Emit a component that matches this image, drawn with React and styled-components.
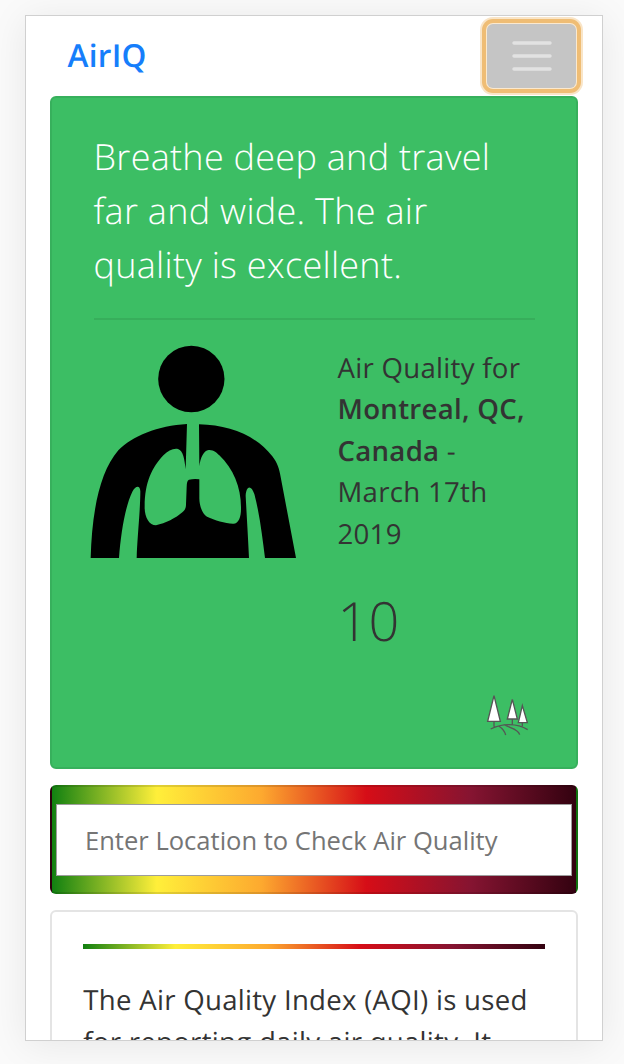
import React from "react";
import styled, { createGlobalStyle } from "styled-components";

const AQI_GRADIENT =
  "linear-gradient(to right, #118011 0%, #ffef3a 20%, #fda92f 40%, #d60d17 60%, #851431 80%, #330210 100%)";

const GlobalStyle = createGlobalStyle`
  *, *::before, *::after { box-sizing: border-box; }
  body {
    margin: 0;
    background: #fafafa;
    font-family: "Open Sans", sans-serif;
    letter-spacing: 0.28px;
    text-rendering: geometricPrecision;
    color: #333;
  }
  p, h1 { margin: 0; }
`;

const Page = styled.div`
  height: 1064px;
  padding: 15px 21px 23px 25px;
  overflow: hidden;
`;

const Screen = styled.main`
  width: 578px;
  height: 1026px;
  border: 1px solid #d0d0d0;
  background: #fff;
  box-shadow: 0 4px 36px rgba(0, 0, 0, 0.08);
  overflow: hidden;
`;

const Navbar = styled.nav`
  display: flex;
  justify-content: space-between;
  height: 80px;
  padding: 8px 26px 0 41.5px;
`;

const Brand = styled.a`
  color: #167efb;
  font-size: 31.6px;
  font-weight: 600;
  line-height: 63px;
`;

const MenuButton = styled.button`
  display: flex;
  align-items: center;
  justify-content: center;
  width: 89px;
  height: 64px;
  padding: 0;
  border: 0;
  border-radius: 6px;
  background: #c5c5c5;
  box-shadow: 0 0 0 1px #fbe9cf, 0 0 0 5px #efbd75, 0 0 0 7px #f9e5c8;
`;

const MenuIcon = styled.svg`
  width: 40px;
  height: 32px;
`;

const Stack = styled.div`
  display: flex;
  flex-direction: column;
  gap: 16px;
  padding: 0 24px;
`;

const Card = styled.section`
  flex: none;
  height: ${({ $height }) => $height}px;
  border: 2px solid ${({ $border }) => $border || "#e4e4e4"};
  border-radius: 6px;
  background: ${({ $background }) => $background || "#fff"};
  padding: ${({ $padding }) => $padding};
`;

const Verdict = styled.h1`
  color: #fff;
  font-size: 36px;
  font-weight: 300;
  line-height: 54px;
  white-space: nowrap;
`;

const Divider = styled.hr`
  height: 2px;
  margin: 26px 0;
  border: 0;
  background: #37ae5b;
`;

const Columns = styled.div`
  display: flex;
`;

const Figure = styled.svg`
  flex: none;
  width: 230px;
  height: 235px;
  margin: -11px 28px 0 -14px;
`;

const Reading = styled.div`
  width: 197px;
  padding-top: 1.5px;
`;

const Place = styled.p`
  font-size: 27.6px;
  line-height: 41.5px;
  white-space: nowrap;

  strong { font-weight: 600; }
`;

const Score = styled.p`
  margin-top: 25px;
  font-size: 54px;
  font-weight: 300;
  line-height: 81px;
`;

const Trees = styled.svg`
  display: block;
  width: 44px;
  height: 42px;
  margin: 32.5px 5px 0 auto;
`;

const SearchBar = styled.form`
  flex: none;
  height: 109px;
  padding: 17px 4px;
  border: 2px solid rgba(0, 0, 0, 0.12);
  border-radius: 6px;
  background: ${AQI_GRADIENT};
`;

const SearchInput = styled.input`
  display: block;
  width: 100%;
  height: 72px;
  padding: 0 28px;
  border: 1px solid rgba(60, 60, 60, 0.5);
  border-radius: 0;
  background: #fff;
  color: #333;
  font: 400 25.56px "Open Sans", sans-serif;

  &::placeholder { color: #757575; opacity: 1; }
`;

const ScaleBar = styled.div`
  height: 5px;
  margin-bottom: 31px;
  background: ${AQI_GRADIENT};
`;

const Copy = styled.p`
  font-size: 27.6px;
  line-height: 41.5px;
  white-space: nowrap;
`;

function LungsFigure() {
  return (
    <Figure viewBox="0 0 690 705" aria-label="Person with lungs">
      <circle cx="334" cy="132" r="99.5" />
      <path
        fillRule="evenodd"
        d="M321 267C234 272 156 303 115 346C60 410 36 525 32 669H117C123 591 136 513 157 470C167 452 180 450 181 469C181 524 172 606 170 669H507C504 604 500 541 497 482C499 452 513 448 523 477C540 541 547 608 555 669H648L602 426C598 402 592 383 577 364C526 299 449 271 357 268L358 394C361 368 371 347 386 345C401 344 410 353 418 361C461 402 484 459 483 521C483 545 476 567 459 566C435 564 404 556 381 545C367 536 358 513 358 490V433Q342 431 327 434Q320 437 320 456L318 508C318 519 315 525 307 532C288 549 256 565 228 571C207 571 193 546 194 514C194 442 216 397 251 360C264 347 280 339 294 342C310 347 313 372 317 403Z"
      />
    </Figure>
  );
}

function TreesIcon() {
  return (
    <Trees viewBox="48 42 132 126" fill="none" stroke="#555" strokeWidth="4">
      <path fill="#fff" d="M72 47L53 124H91ZM127 58L112 117H142ZM157 77L145 128H172Z" />
      <path d="M72 124V140M127 117V133M157 128V139M62 147C96 129 141 129 173 149M86 138Q103 149 107 165M103 134C119 145 143 145 149 164" />
    </Trees>
  );
}

export default function App() {
  return (
    <>
      <GlobalStyle />
      <Page>
        <Screen>
          <Navbar>
            <Brand>AirIQ</Brand>
            <MenuButton aria-label="Toggle navigation">
              <MenuIcon viewBox="0 0 40 32">
                <path d="M2 3H38M2 16H38M2 29H38" stroke="#e2e2e2" strokeWidth="3.5" strokeLinecap="round" />
              </MenuIcon>
            </MenuButton>
          </Navbar>
          <Stack>
            <Card $height={673} $border="#37b05c" $background="#3cbe64" $padding="32px 41px 0 41.5px">
              <Verdict>
                Breathe deep and travel<br />far and wide. The air<br />quality is excellent.
              </Verdict>
              <Divider />
              <Columns>
                <LungsFigure />
                <Reading>
                  <Place>
                    Air Quality for<br />
                    <strong>Montreal, QC,<br />Canada</strong> -<br />
                    March 17th<br />2019
                  </Place>
                  <Score>10</Score>
                </Reading>
              </Columns>
              <TreesIcon />
            </Card>
            <SearchBar>
              <SearchInput placeholder="Enter Location to Check Air Quality" />
            </SearchBar>
            <Card $height={300} $padding="32px 31px 0 31.3px">
              <ScaleBar />
              <Copy>
                The Air Quality Index (AQI) is used<br />for reporting daily air quality. It
              </Copy>
            </Card>
          </Stack>
        </Screen>
      </Page>
    </>
  );
}
